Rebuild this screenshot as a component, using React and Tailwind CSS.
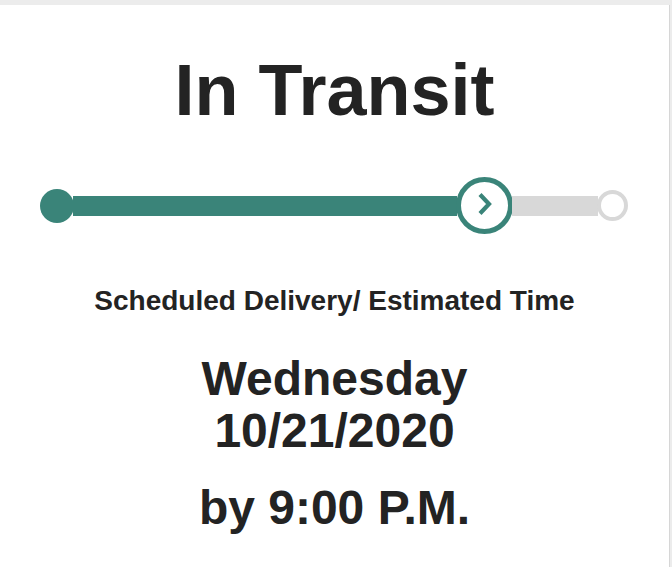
export default function App() {
  return (
    <div className="min-h-screen bg-[#ececec] pt-[5px] font-['Liberation_Sans',Arial,sans-serif] text-[#232323]">
      <div className="h-[562px] w-[670px] border-r-[1px] border-[#d6d6d6] bg-white pt-[49px] text-center">
        <h1 className="text-[72px] font-bold leading-[72px]">In Transit</h1>

        {/* progress track */}
        <div className="mx-[40px] mt-[51px] flex h-[57px] items-center">
          <div className="h-[34px] w-[34px] shrink-0 rounded-full bg-[#3a8479]" />
          <div className="-mx-px h-[20px] w-[384px] bg-[#3a8479]" />
          <div className="flex h-[57px] w-[57px] shrink-0 items-center justify-center rounded-full border-[5px] border-[#3a8479] bg-white pb-[4px]">
            <svg width="18" height="26" viewBox="0 0 18 26" fill="none">
              <polyline points="4,3.5 13,13 4,22.5" stroke="#3a8479" strokeWidth="4.2" strokeLinejoin="miter" />
            </svg>
          </div>
          <div className="-mx-px h-[20px] w-[86px] bg-[#d8d8d8]" />
          <div className="h-[31px] w-[31px] shrink-0 rounded-full border-[4px] border-[#d8d8d8] bg-white" />
        </div>

        <p className="mt-[50px] text-[28px] font-bold leading-[33.6px]">Scheduled Delivery/ Estimated Time</p>
        <p className="mt-[35px] text-[48px] font-bold leading-[52.8px]">
          Wednesday
          <br />
          10/21/2020
        </p>
        <p className="mt-[24px] text-[48px] font-bold leading-[52.8px]">by 9:00 P.M.</p>
      </div>
    </div>
  );
}
